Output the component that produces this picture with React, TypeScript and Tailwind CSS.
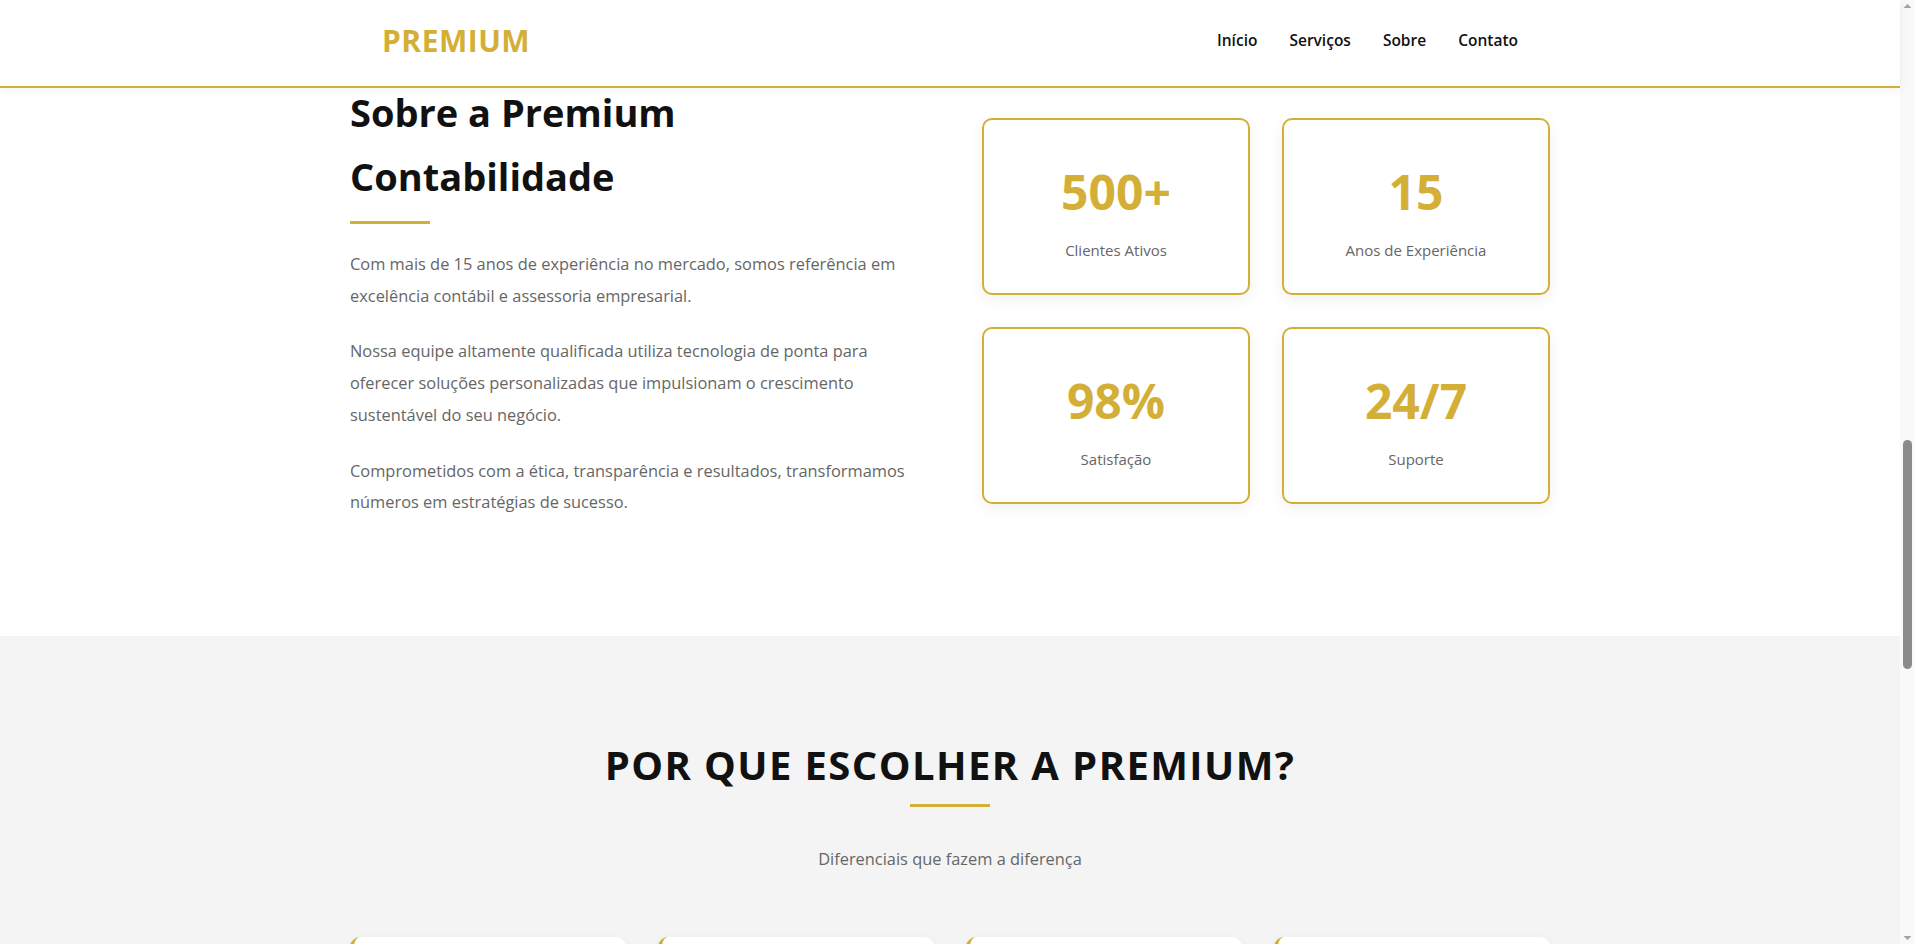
import React from 'react'

const gold = 'text-[#D4AF37]'

const navLinks = ['Início', 'Serviços', 'Sobre', 'Contato']

const paragraphs = [
  'Com mais de 15 anos de experiência no mercado, somos referência em excelência contábil e assessoria empresarial.',
  'Nossa equipe altamente qualificada utiliza tecnologia de ponta para oferecer soluções personalizadas que impulsionam o crescimento sustentável do seu negócio.',
  'Comprometidos com a ética, transparência e resultados, transformamos números em estratégias de sucesso.',
]

const stats = [
  { value: '500+', label: 'Clientes Ativos' },
  { value: '15', label: 'Anos de Experiência' },
  { value: '98%', label: 'Satisfação' },
  { value: '24/7', label: 'Suporte' },
]

function Header() {
  return (
    <header className="relative z-10 h-[88px] shrink-0 bg-white border-b-2 border-[#D4AF37] shadow-[0_2px_10px_rgba(0,0,0,0.06)]">
      <div className="max-w-[1200px] h-full mx-auto px-8 pb-[6px] flex items-center justify-between">
        <span className={`text-[30px] leading-[45px] font-bold tracking-[0.5px] ${gold}`}>PREMIUM</span>
        <nav className="flex items-center gap-8">
          {navLinks.map((l) => (
            <a key={l} className="text-[15.5px] leading-6 font-semibold text-[#111]">
              {l}
            </a>
          ))}
        </nav>
      </div>
    </header>
  )
}

function About() {
  return (
    <section className="bg-white pb-[94px]">
      <div className="max-w-[1200px] mx-auto grid grid-cols-2 gap-16 items-center">
        {/* Text */}
        <div>
          <h2 className="text-[38px] leading-[64px] font-bold text-[#111]">Sobre a Premium Contabilidade</h2>
          <div className="w-20 h-[3px] bg-[#D4AF37] mt-[13px] mb-6" />
          {paragraphs.map((p) => (
            <p key={p} className="text-[16.4px] leading-[31.7px] text-[#666] mb-6">
              {p}
            </p>
          ))}
        </div>

        {/* Stats */}
        <div className="grid grid-cols-2 gap-8">
          {stats.map((s) => (
            <div
              key={s.label}
              className="bg-white border-2 border-[#D4AF37] rounded-[10px] pt-[43px] pb-[30px] text-center shadow-[0_5px_15px_rgba(0,0,0,0.06)]"
            >
              <div className={`text-[48px] leading-[58px] font-bold ${gold}`}>{s.value}</div>
              <div className="mt-4 text-[15px] leading-[26px] text-[#666]">{s.label}</div>
            </div>
          ))}
        </div>
      </div>
    </section>
  )
}

function WhyUs() {
  return (
    <section className="bg-[#f4f4f4] pt-[105px] text-center">
      <h2 className="text-[40px] leading-[48px] font-bold tracking-[1.4px] text-[#111]">POR QUE ESCOLHER A PREMIUM?</h2>
      <div className="w-20 h-[3px] bg-[#D4AF37] mx-auto mt-[15px]" />
      <p className="mt-[36px] text-[16.4px] leading-[31.7px] text-[#666]">Diferenciais que fazem a diferença</p>
      <div className="max-w-[1200px] mx-auto grid grid-cols-4 gap-8 mt-[62px]">
        {[0, 1, 2, 3].map((i) => (
          <div
            key={i}
            className="h-[240px] bg-white rounded-[10px] border-l-4 border-[#D4AF37] shadow-[0_5px_15px_rgba(0,0,0,0.05)]"
          />
        ))}
      </div>
    </section>
  )
}

function Scrollbar() {
  return (
    <div className="w-[15px] shrink-0 bg-[#f9f9f9] flex flex-col items-center">
      <svg width="9" height="15" viewBox="0 0 9 15" className="shrink-0">
        <path d="M0.5 8 L4.5 4 L8.5 8 Z" fill="#a3a3a3" />
      </svg>
      <div className="mt-[425px] w-[9px] h-[229px] rounded-full bg-[#8b8b8b]" />
      <div className="flex-1" />
      <svg width="9" height="15" viewBox="0 0 9 15" className="shrink-0">
        <path d="M0.5 7 L4.5 11 L8.5 7 Z" fill="#a3a3a3" />
      </svg>
    </div>
  )
}

export default function App() {
  return (
    <div className="h-screen flex overflow-hidden bg-white font-['Open_Sans',sans-serif]">
      <div className="flex-1 min-w-0 flex flex-col">
        <Header />
        <main className="flex-1 overflow-hidden">
          <div className="-mt-2">
            <About />
            <WhyUs />
          </div>
        </main>
      </div>
      <Scrollbar />
    </div>
  )
}
